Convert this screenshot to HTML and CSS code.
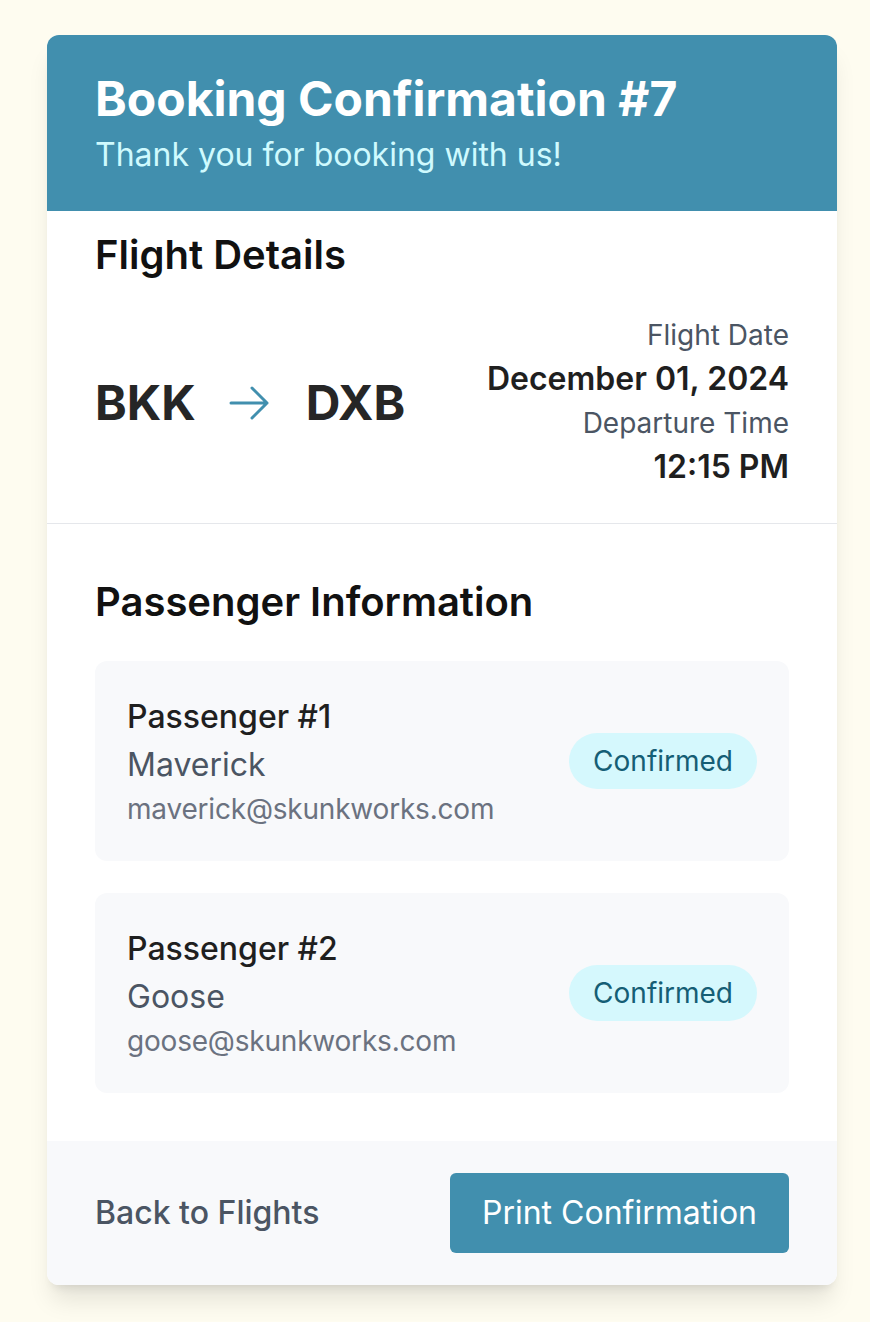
FILE: index.html
```html
<!DOCTYPE html>
<html lang="en">
<head>
<meta charset="utf-8">
<title>Booking Confirmation</title>
<link rel="stylesheet" href="styles.css">
</head>
<body>
<div class="card">
  <header class="card-header">
    <h1 class="title">Booking Confirmation #7</h1>
    <p class="subtitle">Thank you for booking with us!</p>
  </header>

  <section class="flight">
    <h2 class="section-title flight-title">Flight Details</h2>
    <div class="flight-row">
      <div class="route">
        <span class="code">BKK</span>
        <svg class="arrow" width="48" height="48" viewBox="0 0 24 24" fill="none" stroke="currentColor" stroke-width="1.5" stroke-linecap="round" stroke-linejoin="round"><path d="M13.5 4.5L21 12m0 0l-7.5 7.5M21 12H3"/></svg>
        <span class="code">DXB</span>
      </div>
      <div class="times">
        <div class="label">Flight Date</div>
        <div class="value">December 01, 2024</div>
        <div class="label">Departure Time</div>
        <div class="value">12:15 PM</div>
      </div>
    </div>
  </section>

  <section class="passengers">
    <h2 class="section-title pass-title">Passenger Information</h2>
    <div class="plist">
      <div class="pcard">
        <div class="pinfo">
          <div class="pnum">Passenger #1</div>
          <div class="pname">Maverick</div>
          <div class="pmail">maverick@skunkworks.com</div>
        </div>
        <span class="badge">Confirmed</span>
      </div>
      <div class="pcard">
        <div class="pinfo">
          <div class="pnum">Passenger #2</div>
          <div class="pname">Goose</div>
          <div class="pmail">goose@skunkworks.com</div>
        </div>
        <span class="badge">Confirmed</span>
      </div>
    </div>
  </section>

  <footer class="card-footer">
    <a class="back">Back to Flights</a>
    <button class="print">Print Confirmation</button>
  </footer>
</div>
</body>
</html>
```

FILE: styles.css
```css
* { box-sizing: border-box; }
html, body { margin: 0; padding: 0; }
body {
  background: #fefcf0;
  font-family: Inter, "Noto Sans", sans-serif;
  padding: 35px 0 37px 47px;
}
.card {
  width: 790px;
  background: #ffffff;
  border-radius: 12px;
  overflow: hidden;
  box-shadow: 0 20px 25px -5px rgba(0,0,0,0.10), 0 8px 10px -6px rgba(0,0,0,0.10);
}
.card-header {
  background: #418fae;
  padding: 32px 48px;
}
.title {
  margin: 0;
  color: #ffffff;
  font-size: 48px;
  line-height: 64px;
  font-weight: 700;
}
.subtitle {
  margin: 0;
  color: #cffafe;
  font-size: 32px;
  line-height: 48px;
}
.flight {
  padding: 16px 48px 32px;
  border-bottom: 1px solid #e5e7eb;
}
.section-title {
  margin: 0;
  font-size: 40px;
  line-height: 56px;
  font-weight: 600;
  color: #111111;
}
.flight-title { margin-bottom: 32px; }
.flight-row {
  display: flex;
  justify-content: space-between;
  align-items: center;
}
.route {
  display: flex;
  align-items: center;
}
.code {
  font-size: 48px;
  line-height: 64px;
  font-weight: 700;
  color: #262626;
}
.arrow {
  color: #418fae;
  margin: 0 33px 0 29px;
}
.times { text-align: right; }
.label {
  font-size: 28px;
  line-height: 40px;
  color: #4b5563;
}
.value {
  font-size: 32px;
  line-height: 48px;
  font-weight: 600;
  color: #1f1f1f;
}
.passengers {
  padding: 50px 48px 48px;
}
.pass-title { margin-bottom: 31px; }
.plist {
  display: flex;
  flex-direction: column;
  gap: 32px;
}
.pcard {
  background: #f8f9fb;
  border-radius: 12px;
  padding: 32px;
  display: flex;
  justify-content: space-between;
  align-items: center;
}
.pnum {
  font-size: 32px;
  line-height: 48px;
  font-weight: 500;
  color: #1f1f1f;
}
.pname {
  font-size: 32px;
  line-height: 48px;
  color: #4b5563;
}
.pmail {
  font-size: 28px;
  line-height: 40px;
  color: #6b7280;
  letter-spacing: -0.2px;
}
.badge {
  background: #d5f8fd;
  color: #155e75;
  font-size: 28px;
  line-height: 40px;
  padding: 8px 24px;
  border-radius: 9999px;
}
.card-footer {
  background: #f8f9fb;
  padding: 32px 48px;
  display: flex;
  justify-content: space-between;
  align-items: center;
}
.back {
  font-size: 32px;
  line-height: 48px;
  font-weight: 500;
  color: #4b5563;
}
.print {
  background: #418fae;
  color: #ffffff;
  border: 0;
  border-radius: 6px;
  font-family: inherit;
  font-size: 32px;
  line-height: 48px;
  padding: 16px 32px;
}
```
